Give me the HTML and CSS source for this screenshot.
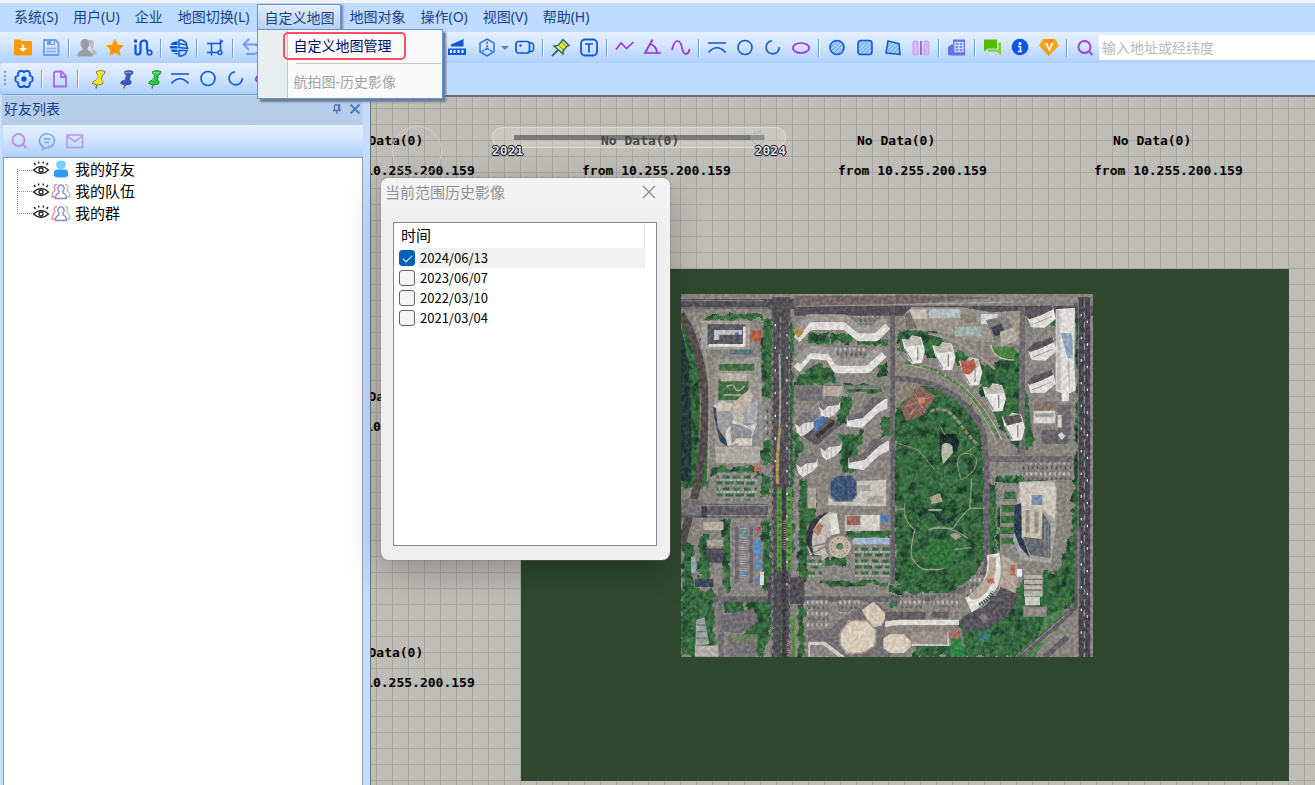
FILE: index.html
```html
<!DOCTYPE html>
<html lang="zh-CN">
<head>
    <meta charset="UTF-8">
    <meta name="viewport" content="width=device-width, initial-scale=1.0">
    <title>地图</title>
    <link rel="stylesheet" href="styles.css">
</head>
<body>
    <!-- shared icons -->
    <svg width="0" height="0" class="defs">
        <defs>
            <pattern id="hatch" width="3" height="3" patternUnits="userSpaceOnUse" patternTransform="rotate(45)">
                <rect width="3" height="3" fill="#a9d2f7"/><path d="M0 0v3" stroke="#3c86e0" stroke-width="1.2"/>
            </pattern>
            <symbol id="pushpin" viewBox="0 0 20 20">
                <path d="M11 15.500l-1 4" stroke="#777" stroke-width="1.500"/>
                <path d="M10.500 2.500 Q15 .3 19 2.500 L18.500 5 L16.500 6 L15.500 11 Q18.500 12.500 16.500 15 Q11 17.500 6.500 14.500 Q6.500 12 10.500 11 L12 6 L10.500 4.500Z" stroke="#555" stroke-width=".7"/>
                <path d="M12 5.500l-1.500 6M11 3.500q3 1 6 0" stroke="#fff" stroke-opacity=".55" fill="none"/>
            </symbol>
            <symbol id="arcline" viewBox="0 0 20 20"><path d="M1 5h18M1.500 14.500Q10 5 18.500 14.500" fill="none" stroke="#0a56e0" stroke-width="1.600"/></symbol>
            <symbol id="circle" viewBox="0 0 20 20"><circle cx="10" cy="9.500" r="7" fill="none" stroke="#0a56e0" stroke-width="1.600"/></symbol>
            <symbol id="arc" viewBox="0 0 20 20"><path d="M9 2.700A6.600 6.600 0 1 0 16.300 9" fill="none" stroke="#0a56e0" stroke-width="1.600"/></symbol>
            <symbol id="ellipse" viewBox="0 0 20 20"><ellipse cx="10" cy="10" rx="8.200" ry="5" fill="none" stroke="#9a2ed8" stroke-width="1.700"/></symbol>
            <symbol id="eye" viewBox="0 0 18 16"><path d="M1.500 9Q9 2 16.500 9Q9 16 1.500 9ZM3.500 4 2 2M7 2.500 6.500 .5M11 2.500l.5-2M14.500 4l1.500-2" fill="none" stroke="#222" stroke-width="1.300"/><circle cx="9" cy="9" r="2" fill="none" stroke="#222" stroke-width="1.300"/></symbol>
            <symbol id="group" viewBox="0 0 20 18">
                <g fill="none" stroke-width="1.300">
                    <path d="M6 2.500a2.600 2.600 0 0 0-2 4.500L3.500 9Q1 10.500 1 15h3" stroke="#ea8888"/>
                    <path d="M14 2.500a2.600 2.600 0 0 1 2 4.500l.5 2Q19 10.500 19 15h-3" stroke="#9bd6a0"/>
                    <path d="M8 9A3 3.500 0 1 1 12 9V11Q15.500 12 15.500 16.500h-11Q4.500 12 8 11Z" stroke="#8a80d8" fill="#fff"/>
                </g>
            </symbol>
            <symbol id="search" viewBox="0 0 20 20"><circle cx="9.500" cy="9" r="6" fill="none" stroke="currentColor" stroke-width="1.800"/><path d="M14 13.500l3.500 3.500" stroke="currentColor" stroke-width="1.800"/></symbol>
        </defs>
    </svg>

    <nav class="menubar">
        <ul>
            <li><button>系统(S)</button></li>
            <li><button>用户(U)</button></li>
            <li><button>企业</button></li>
            <li><button>地图切换(L)</button></li>
            <li class="open">
                <button>自定义地图</button>
                <div class="dropdown">
                    <button class="marked">自定义地图管理</button>
                    <hr>
                    <button disabled>航拍图-历史影像</button>
                </div>
            </li>
            <li><button>地图对象</button></li>
            <li><button>操作(O)</button></li>
            <li><button>视图(V)</button></li>
            <li><button>帮助(H)</button></li>
        </ul>
    </nav>

    <div class="toolbar main-tools">
        <button aria-label="打开"><svg viewBox="0 0 20 20"><path d="M1 3q0-1.500 1.500-1.500h5l1.500 1.500h8.500q1.500 0 1.500 1.500v11.500q0 1.500-1.500 1.500h-15q-1.500 0-1.500-1.500z" fill="#f90"/><path d="M8.800 6.500h2.400v3.500h2.800l-4 4-4-4h2.800z" fill="#fff"/></svg></button>
        <button aria-label="保存"><svg viewBox="0 0 20 20"><path d="M3 2h11.500l3 3V17H3Z" fill="none" stroke="#6c9df0" stroke-width="1.800"/><path d="M6 2h8v5H6z" fill="#6c9df0"/><path d="M10.500 3h2v3h-2z" fill="#fff"/><path d="M5.500 10.500h9.500M5.500 13.500h9.500" stroke="#8ab2f3" stroke-width="1.300"/></svg></button>
        <i class="sep"></i>
        <button aria-label="用户"><svg viewBox="0 0 20 20"><path d="M12 2q4-1 4.500 3t-1.500 6q4 1 5 5l-4 1z" fill="#b4b8bd"/><path d="M8 1q4.500 0 4.500 4.500 0 3-2 5v1.500q5 1.500 5.500 6.500H0q.5-5 5.500-6.500V10.500q-2-2-2-5Q3.500 1 8 1z" fill="#9c9c9c"/></svg></button>
        <button aria-label="收藏"><svg viewBox="0 0 20 20"><path d="M10 .5l2.800 5.900 6.200.8-4.500 4.500 1.100 6.400L10 15l-5.600 3.100 1.100-6.400L1 7.200l6.200-.8z" fill="#ff9800"/></svg></button>
        <button aria-label="路线"><svg viewBox="0 0 20 20"><path d="M2.500 6.500v8q0 2 2.300 2t2.700-2.500V5.500Q8 2.500 11 2.500t3 3v5.500q0 1 1.500 2" fill="none" stroke="#0a56e0" stroke-width="2.200"/><circle cx="16.500" cy="14.500" r="2.300" fill="none" stroke="#0a56e0" stroke-width="1.600"/><path d="M1 1.500h3v3H1z" fill="#0a56e0"/></svg></button>
        <i class="sep"></i>
        <button aria-label="地球"><svg viewBox="0 0 20 20"><path d="M8.500 3 3 4.500 1.500 7H8.500zM1 8h7.500v2.500H1zM2 11.500h6.500V14H3zM4 15h4.500v2z" fill="#0a56e0"/><path d="M10 2h3l4 2.500 1.500 6-8.500-1zM10 12.500h8l-2 4-3.500 1.500H10z" fill="none" stroke="#0a56e0" stroke-width="1.500"/><path d="M10 5.500l8 1.500" stroke="#0a56e0" stroke-width="1.300"/></svg></button>
        <i class="sep"></i>
        <button aria-label="裁剪"><svg viewBox="0 0 20 20"><path d="M2 5.500h13l3-3M6.500 5.500v12M2 14.500h11M15.500 1.500v10.500" fill="none" stroke="#0a56e0" stroke-width="1.500"/><circle cx="15" cy="14.500" r="2" fill="none" stroke="#0a56e0" stroke-width="1.300"/></svg></button>
        <i class="sep"></i>
        <button aria-label="撤销"><svg viewBox="0 0 20 20"><path d="M8 1 2.500 6.500 8 12M3 6.500h10q5 0 5 4.500t-5 5H5" fill="none" stroke="#6c9df0" stroke-width="1.800"/></svg></button>
        <i class="under-menu"></i>
        <button aria-label="测量"><svg viewBox="0 0 20 20"><path d="M4 6.500 16.500 1v7.500H4z" fill="#0a56e0"/><rect x="1" y="10.500" width="18" height="6.500" fill="#0a56e0"/><path d="M3 12h2v3H3zM6.500 12h2v3h-2zM10.500 12h2v3h-2zM14.500 12h2v3h-2z" fill="#fff"/></svg></button>
        <button aria-label="三维"><svg viewBox="0 0 20 20"><path d="M12 1 19 5.200v8.600l-7 4.200-7-4.200V5.200z" fill="none" stroke="#2a6fe6" stroke-width="1.500"/><path d="M12 3.500v7M12 10.500l-5 3M12 10.500l5 3" stroke="#0a56e0" stroke-width="1.300" stroke-dasharray="2.500 1"/></svg></button>
        <button class="arrow" aria-label="更多"><svg viewBox="0 0 12 20"><path d="M2 8h8l-4 4z" fill="#5a83c2"/></svg></button>
        <button aria-label="录像"><svg viewBox="0 0 20 20"><rect x="1" y="3.500" width="13.500" height="11.500" rx="2.500" fill="none" stroke="#0a56e0" stroke-width="1.700"/><path d="M15 5h2l1.500 1.500v5.500L17 13.500h-2" fill="none" stroke="#0a56e0" stroke-width="1.500"/><circle cx="5.500" cy="7.500" r="1.200" fill="#0a56e0"/></svg></button>
        <i class="sep"></i>
        <button aria-label="图钉"><svg viewBox="0 0 20 20"><path d="M1 18 7 12" stroke="#2a6f7a" stroke-width="1.800"/><path d="M12 1.500l6 6-1.800.6-4 4.400L12 16 3 8l4-.6L10.500 3.500z" fill="#f5f016" stroke="#1b66a0" stroke-width="1.500"/><path d="M8 7.500l5 5M11 4.500l4 4" stroke="#1b66a0" stroke-width=".8"/></svg></button>
        <button aria-label="文字"><svg viewBox="0 0 20 20"><rect x="2" y="1.500" width="16" height="16" rx="4" fill="none" stroke="#0a56e0" stroke-width="1.800"/><path d="M6 6h8M10 6V14.500" stroke="#0a56e0" stroke-width="1.700"/></svg></button>
        <i class="sep"></i>
        <button aria-label="折线"><svg viewBox="0 0 20 20"><path d="M1 11.500 6 5l5.500 5.500L18.500 4" fill="none" stroke="#9a2ed8" stroke-width="1.600"/></svg></button>
        <button aria-label="角度"><svg viewBox="0 0 20 20"><path d="M9.500 1.500 2 15h16M7.500 6q6 2 6.500 9" fill="none" stroke="#9a2ed8" stroke-width="1.700"/></svg></button>
        <button aria-label="曲线"><svg viewBox="0 0 20 20"><path d="M1 12Q3 3 6.500 3T11 10.500Q12.500 16 15 16t3.500-5" fill="none" stroke="#9a2ed8" stroke-width="1.700"/></svg></button>
        <i class="sep"></i>
        <button aria-label="弧线"><svg><use href="#arcline"/></svg></button>
        <button aria-label="圆"><svg><use href="#circle"/></svg></button>
        <button aria-label="圆弧"><svg><use href="#arc"/></svg></button>
        <button aria-label="椭圆"><svg><use href="#ellipse"/></svg></button>
        <i class="sep"></i>
        <button aria-label="圆形区域"><svg viewBox="0 0 20 20"><circle cx="10" cy="9.500" r="7" fill="url(#hatch)" stroke="#0a56e0" stroke-width="1.600"/></svg></button>
        <button aria-label="矩形区域"><svg viewBox="0 0 20 20"><rect x="3" y="2.500" width="14" height="14" rx="3" fill="url(#hatch)" stroke="#0a56e0" stroke-width="1.600"/></svg></button>
        <button aria-label="多边形区域"><svg viewBox="0 0 20 20"><path d="M5 3 16 5.500l1 11-14-1.500z" fill="url(#hatch)" stroke="#0a56e0" stroke-width="1.500"/></svg></button>
        <button aria-label="对称"><svg viewBox="0 0 20 20"><rect x="2" y="3" width="5" height="14" rx="1" fill="#dcb6f6" stroke="#b4a0d8" stroke-width=".8"/><rect x="13" y="3" width="5" height="14" rx="1" fill="#dcb6f6" stroke="#b4a0d8" stroke-width=".8"/><path d="M10 3v14" stroke="#9a2ed8" stroke-width="1.400"/></svg></button>
        <i class="sep"></i>
        <button aria-label="报表"><svg viewBox="0 0 20 20"><path d="M6 1.500h12v16H3q-2 0-2-2V9L4.500 6.500H6z" fill="#646fe8"/><path d="M8 4.500h8v9H8zM8 7.500h8M8 10.500h8M12 4.500v9" fill="none" stroke="#cfdcff" stroke-width="1.400"/></svg></button>
        <i class="sep"></i>
        <button aria-label="消息"><svg viewBox="0 0 20 20"><path d="M1 1.500h13v9H5l-4 3z" fill="#55bb00"/><path d="M15.500 4.500H18v13l-4-4H5v-2h10.500z" fill="#7bd11a"/></svg></button>
        <button aria-label="信息"><svg viewBox="0 0 20 20"><circle cx="9" cy="9" r="8.300" fill="#0a56e8"/><circle cx="9" cy="5.500" r="1.500" fill="#fff"/><path d="M7 8.500h2.500v5H11H7" fill="none" stroke="#fff" stroke-width="1.500"/></svg></button>
        <button aria-label="会员"><svg viewBox="0 0 20 20"><path d="M4 1h12L20 7.500 10 18 0 7.500z" fill="#ffa51c"/><path d="M4 1h12L10 6.500zM0 7.500l10 10.500V13.500z" fill="#f58b00" opacity=".6"/><path d="M6.500 6h2.500M11.500 6H14M7.500 6l2.800 6 2.700-6" fill="none" stroke="#fff" stroke-width="1.500"/></svg></button>
        <i class="sep"></i>
        <button class="purple" aria-label="搜索"><svg><use href="#search"/></svg></button>
        <input type="text" aria-label="地址" placeholder="输入地址或经纬度">
    </div>

    <div class="toolbar draw-tools">
        <i class="grip"></i>
        <button aria-label="设置"><svg viewBox="0 0 20 20"><path d="M5.500 2h3l1.500 1.200L11.500 2h3l1.500 2.500-.3 2 2.800 1.500v4l-2.800 1.500.3 2-1.500 2.500h-3L10 16.800 8.500 18h-3L4 15.500l.3-2L1.500 12V8l2.800-1.500-.3-2z" fill="none" stroke="#0a56e0" stroke-width="1.800" stroke-linejoin="round"/><circle cx="10" cy="10" r="2.700" fill="#0a56e0"/></svg></button>
        <i class="sep"></i>
        <button aria-label="新建"><svg viewBox="0 0 20 20"><path d="M5 2.500h6.500L16 7v10.500H4v-14zM11 3v5h5" fill="none" stroke="#a06af0" stroke-width="1.800"/></svg></button>
        <i class="sep"></i>
        <button aria-label="黄色图钉"><svg fill="#f2ea10"><use href="#pushpin"/></svg></button>
        <button aria-label="蓝色图钉"><svg fill="#2f58c8"><use href="#pushpin"/></svg></button>
        <button aria-label="绿色图钉"><svg fill="#12d436"><use href="#pushpin"/></svg></button>
        <button aria-label="弧线"><svg><use href="#arcline"/></svg></button>
        <button aria-label="圆"><svg><use href="#circle"/></svg></button>
        <button aria-label="圆弧"><svg><use href="#arc"/></svg></button>
        <button aria-label="椭圆"><svg><use href="#ellipse"/></svg></button>
    </div>

    <main>
        <aside>
            <header>
                <h2>好友列表</h2>
                <button aria-label="固定"><svg viewBox="0 0 12 12"><path d="M3.500 2h5v5M3.500 2v5M2 7.500h8M6 7.500V11M7.500 2v5" fill="none" stroke="#4a77b8" stroke-width="1.300"/></svg></button>
                <button aria-label="关闭"><svg viewBox="0 0 12 12"><path d="M1.500 1.500l9 9M10.500 1.500l-9 9" stroke="#4a77b8" stroke-width="1.800"/></svg></button>
            </header>
            <div class="toolbar friend-tools">
                <button class="lilac" aria-label="查找"><svg><use href="#search"/></svg></button>
                <button aria-label="聊天"><svg viewBox="0 0 20 20"><path d="M6 17.500V15.500A7.500 6.800 0 1 1 10 16.500Q8.500 16.500 6 18.500ZM6.500 8h7M7.500 11.500H12" fill="none" stroke="#6fa3f4" stroke-width="1.500"/></svg></button>
                <button aria-label="邮件"><svg viewBox="0 0 20 20"><path d="M2 4h15.500v12.500H2zM2 5l7.800 5.500L17.500 5" fill="none" stroke="#c092ec" stroke-width="1.500"/></svg></button>
            </div>
            <ul class="tree">
                <li><svg class="eye"><use href="#eye"/></svg><svg class="who" viewBox="0 0 20 18"><path d="M3 12q0-2 3-2.500h8q3 .5 3 2.500v3.500q0 2-7 2T3 15.500z" fill="#2c9df2"/><path d="M6 1.500q4-2 8 0 1.500 3 0 6Q12 9.500 10 9.500T6 7.500q-1.500-3 0-6z" fill="#79d0fb"/></svg>我的好友</li>
                <li><svg class="eye"><use href="#eye"/></svg><svg class="who"><use href="#group"/></svg>我的队伍</li>
                <li><svg class="eye"><use href="#eye"/></svg><svg class="who"><use href="#group"/></svg>我的群</li>
            </ul>
        </aside>

        <section class="map">
            <div class="tiles">
                <p>No Data(0)<br>from 10.255.200.159</p>
                <p>No Data(0)<br>from 10.255.200.159</p>
                <p>No Data(0)<br>from 10.255.200.159</p>
                <p>No Data(0)<br>from 10.255.200.159</p>
                <p class="first">No Data(0)<br>from 10.255.200.159</p>
                <p class="first">No Data(0)<br>from 10.255.200.159</p>
            </div>

            <div class="layer">
                <svg class="photo" viewBox="0 0 1236 1089" preserveAspectRatio="none">
                    <defs>
                        <filter id="foliage" x="-5%" y="-5%" width="110%" height="110%" color-interpolation-filters="sRGB">
                            <feTurbulence type="fractalNoise" baseFrequency=".035" numOctaves="4" seed="4" result="n"/>
                            <feDisplacementMap in="SourceGraphic" in2="n" scale="30" xChannelSelector="R" yChannelSelector="G" result="d"/>
                            <feColorMatrix in="n" values="0 0 0 0 .1  0 0 0 0 .24  0 0 0 0 .16  3 0 0 0 -1.3" result="s"/>
                            <feComposite in="s" in2="d" operator="in" result="shade"/>
                            <feMerge><feMergeNode in="d"/><feMergeNode in="shade"/></feMerge>
                        </filter>
                        <filter id="grain" x="0" y="0" width="100%" height="100%" color-interpolation-filters="sRGB">
                            <feTurbulence type="fractalNoise" baseFrequency=".09" numOctaves="3" seed="9"/>
                            <feColorMatrix values="3 0 0 0 -1.1  3 0 0 0 -1.1  3 0 0 0 -1.1  0 0 0 0 .1"/>
                        </filter>
                        <pattern id="cars" width="14" height="34" patternUnits="userSpaceOnUse">
                            <rect width="14" height="34" fill="#87837f"/><rect x="2" y="3" width="6" height="10" fill="#cac9c9"/><rect x="8" y="19" width="4" height="9" fill="#4c4a50"/>
                        </pattern>
                        <pattern id="lot" width="32" height="36" patternUnits="userSpaceOnUse">
                            <rect width="32" height="36" fill="#938e88"/><path d="M0 6h20M8 24h24" stroke="#2f6a40" stroke-width="9"/><path d="M2 15h28" stroke="#d5d2cf" stroke-width="4" stroke-dasharray="5 6"/>
                        </pattern>
                    </defs>
                    <rect width="1236" height="1089" fill="#8d8883"/>

                    <!-- planting -->
                    <g filter="url(#foliage)" fill="#37713f" stroke="none">
                        <path d="M0 60l40 50 40 170 0 300-80 0z"/>
                        <path d="M75 60h165v18H75zM245 70h27v240h-27zM315 80h22v700h-22zM58 130h25v28H58zM105 215h115v25H105zM110 260h85v60h-85zM90 520h150v30H90zM240 440h30v70h-30z"/>
                        <path d="M385 120h60v28h-60zM450 120h60v28h-60zM530 135h85v18h-85zM350 240l60-30 50 20 10 35-130 20zM490 270h115v26H490zM470 310h40v80h-40zM600 370h28v60h-28zM340 410l30 40-30 80zM465 425l90-15-30 60 20 50-60 20zM590 210h34v40h-34z"/>
                        <path d="M655 110h110l60 60 110 50 60-60 30 20v80l20 90 10 110-60-10-30-40-70-140-80-70-160-30zM1040 70h85v22h-85zM1187 30h38v520h-38zM980 330l50-10 30 120-50 50z"/>
                        <path d="M640 370q30-90 90-95 110 10 160 90 20 50 20 120v300q-10 70-100 95l-130 0q-38 0-38-50z"/>
                        <path d="M950 545h150v22H950zM915 570h30v280h-30zM950 640h55v130h-55zM1180 550h40l-20 370-90 50-120 60-80-60 20-60 60-10 50-60 90-10 40-100z"/>
                        <path d="M240 545h28v60h-28zM245 680h25v210h-25zM125 680h25v210h-25zM55 720h30v150H55zM5 750h35v150H5zM0 885h100v200H0zM130 920h60v40h-60zM200 915h70v90l-30 84-45-30z"/>
                        <path d="M355 560h25v300h-25zM350 930h20v159h-20zM280 960h20v129h-20zM380 600h25v90h-25zM500 710h130v22H500zM430 790h70v25h-70zM420 860h200v14H420zM625 870h200v30H625zM620 910h30v30h-30z"/>
                        <path d="M830 980l130-20 100 10 60-20-80 139H700v-35h150z"/>
                    </g>
                    <path d="M0 100q28 110 30 230t0 230H0z" fill="#203a38"/>
                    <path d="M35 100q30 120 22 300t-22 190" stroke="#7c8f4c" stroke-width="4" fill="none"/>
                    <path d="M1030 1060l30-20 30 5-30 44h-60zM1090 970l60-30-20 70-60 20z" fill="#4b8549"/>

                    <!-- streets -->
                    <g fill="none" stroke="#514e54">
                        <path d="M0 30h340M340 50h896" stroke-width="30"/>
                        <path d="M0 60C60 160 80 290 70 400S60 560 0 750" stroke-width="24" stroke="#554b4d"/>
                        <path d="M300 10v1079" stroke-width="56"/>
                        <path d="M0 650h260" stroke-width="42" stroke="#605d62"/>
                        <path d="M635 60v810" stroke-width="14" stroke="#66636a"/>
                        <path d="M638 255q40-5 90 10 120 30 175 140 15 60 14 160v250q-10 60-120 90l-70 10H100" stroke-width="17" stroke="#68646a"/>
                        <path d="M1023 40v450M915 495h260" stroke-width="18" stroke="#706c70"/>
                        <path d="M1210 10v1079" stroke-width="38" stroke="#45434b"/>
                        <path d="M1015 1089 1150 970 1190 930V700M1090 1089l70-60" stroke-width="17" stroke="#625f66"/>
                        <path d="M340 280h290" stroke-width="12" stroke="#817c7c"/>
                        <path d="M120 880v209" stroke-width="18" stroke="#777277"/>
                    </g>
                    <path d="M260 850h110v80H260z" fill="#4e4b52"/>
                    <path d="M340 4h300l300 6-300 24H340z" fill="#75696a"/>
                    <path d="M345 13h300M345 27h290" stroke="#966960" stroke-width="4" stroke-dasharray="3 6"/>
                    <g fill="none" stroke="#d8d5d6" stroke-width="2">
                        <path d="M345 3h300M340 38 1000 24M0 20h250M0 42h260" opacity=".7"/>
                        <path d="M298 70v320M275 80v1000M325 80v1000" stroke-dasharray="14 10" opacity=".7"/>
                        <path d="M1210 20v1069" stroke-dasharray="20 12"/>
                        <path d="M1192 20v1069M1229 20v1069" opacity=".5"/>
                        <path d="M1020 1080 1150 966M70 635h190M70 665h190" opacity=".7"/>
                    </g>
                    <path d="M287 580h18v250h-18zM315 580h18v250h-18zM301 960h10v129h-10zM331 960h10v129h-10z" fill="#56933f"/>
                    <path d="M296 600v230M324 600v230" stroke="#346b36" stroke-width="8" stroke-dasharray="6 14"/>
                    <path d="M295 180q6 120 0 220" stroke="#b0aaa6" stroke-width="5" fill="none"/>
                    <path d="M297 400q-10 80-8 170" stroke="#b89b55" stroke-width="9" fill="none"/>
                    <path d="M309 570v519" stroke="#3c3b44" stroke-width="13"/>
                    <path d="M311 680v90M322 1040v49" stroke="#b57f77" stroke-width="8" stroke-dasharray="3 4"/>
                    <path d="M283 90v470M318 120v800M1201 60v980M1219 80v950" stroke="#eee" stroke-width="4" stroke-dasharray="7 61"/>
                    <path d="M40 66C90 190 90 280 80 560" stroke="#a59e96" stroke-width="5" fill="none"/>

                    <!-- north-west block -->
                    <g transform="translate(-3 -12)">
                        <path d="M62 92h148v86H62z" fill="#aaa49c"/>
                        <path d="M83 103h113v62H83z" fill="#575861"/><path d="M102 120h84v14h-68v16h-16z" fill="#c6c7c8"/><path d="M86 162h110v8H86zM189 110h8v55h-8z" fill="#ecebea"/><path d="M165 127h12v8h-12z" fill="#3e73bd"/>
                        <path d="M212 121h31v33h-31z" fill="#bd583f"/><path d="M150 179h70v14h-70z" fill="#4f7780"/>
                        <path d="M102 210l140-10 8 280-145 30z" fill="#9e9b96"/>
                        <path d="M118 222h105v20H118zM115 268h90v62h-90z" fill="#3f6d43"/><path d="M122 250h80v24h-80z" fill="#c3b7a8"/>
                        <path d="M140 290q20-12 25 5t30-8M130 315h60" stroke="#b9b49d" stroke-width="4" fill="none"/>
                        <path d="M100 345l25-15 35 10 10 50-20 30-30 0-12-50z" fill="#a2a3a3"/><path d="M100 345l25-12 35 8-10 20-40 5z" fill="#d3cdc2"/>
                        <path d="M158 340l50-42 12 20-32 85-30-15z" fill="#c9bcac"/><path d="M188 403l50-80v145h-60z" fill="#8b8d93"/><path d="M187 400l5-50 43-20-5 70z" fill="#afb1b5"/>
                        <path d="M136 425l25-35 40 18 32-10-20 50-70 20z" fill="#d7d6d3"/><path d="M150 400l30 5 35 15 0 30-45-5-15 20z" fill="#96979c"/><path d="M176 445h40v22h-40z" fill="#ddd4c6"/><path d="M98 350l10 5 5 60 25 35 5 20-22-15-14-50z" fill="#34445a"/>
                        <path d="M108 470h132v50H108z" fill="#b3b0ab"/><path d="M140 545h70v14h-70z" fill="#4fa6a7"/><path d="M222 530h22v14h-22z" fill="#c76a4b"/>
                        <path d="M250 360h18v90h-18z" fill="url(#cars)"/>
                        <path d="M510 78h90v50h-90zM440 165h120v35H440z" fill="url(#cars)"/>
                        <g fill="none" stroke-linejoin="bevel">
                            <path d="M350 148l38-40h108l42 34h50l34-34" stroke="#e9e7e4" stroke-width="24"/>
                            <path d="M352 128l34-44h109l42 34h44l34-32" stroke="#a19d9b" stroke-width="22"/>
                            <path d="M350 238l38-44 60 6 22 38h92l50-46" stroke="#ebe9e6" stroke-width="24"/>
                            <path d="M352 216l36-38 64 4 22 34h82l46-42" stroke="#a29e9c" stroke-width="22"/>
                        </g>
                        <path d="M340 125l18-15 14 16-18 18z" fill="#b98e42"/>
                        <path d="M348 292h78v40h-78z" fill="#747174"/><path d="M430 288h60v30h-60z" fill="#b9ada1"/>
                        <g id="tower">
                            <path d="M415 345l20-22 36-4 10 14v22l-18 20-28 14-12-12z" fill="#e9e7e5"/><path d="M414 348l20-28 34-3 14 14-6 14-32 4-14 12z" fill="#7d7a7b"/><path d="M436 356v24M450 350v30M464 346v26" stroke="#a8a5a5" stroke-width="2"/>
                        </g>
                        <use href="#tower" x="-72" y="50"/><use href="#tower" x="4" y="122"/><use href="#tower" x="-68" y="172"/>
                        <path d="M370 440l70-60 45 20-75 68z" fill="#63585a"/><path d="M400 395l30-18 10 10-36 45z" fill="#4d78b8"/><path d="M410 440l52-45" stroke="#37343a" stroke-width="12"/>
                        <g id="slab"><path d="M500 378l46-6 44-42 32-4v30l-28 12-48 46-46-5z" fill="#e9e7e5"/><path d="M500 376l42-8 34-48 44 4-30 20-42 40-44 8z" fill="#6e6a6d"/></g>
                        <use href="#slab" x="5" y="126"/>
                    </g>

                    <!-- north-east block -->
                    <g transform="translate(612 -12)">
                        <path d="M55 120l5-50 20-18h150l90 15 85-5-2 100-150-10-100-30z" fill="#a0998f"/><path d="M132 57h95v28h-95z" fill="#bac5c5"/><path d="M75 58h50v28H75z" fill="#d0c8bd"/><path d="M210 110h78v28h-78z" fill="#a4b7b0"/><path d="M60 75l15-10 20 50-30 5z" fill="#77716e"/><path d="M225 75l40-10 10 30-45 6z" fill="#8d837c"/>
                        <path d="M288 72h50v30h-50z" fill="#d8dfe0"/><path d="M302 90l62-12 30 50-15 40-48-10z" fill="#83827f"/><path d="M318 112l30-12 12 30-32 10z" fill="#3f434b"/><path d="M345 125l45-15 8 40-50 20z" fill="#b9b2a8"/>
                        <path d="M322 170l68 2v34l-58-5z" fill="#478442"/><path d="M318 165q5 45 70 45" stroke="#cfc1a8" stroke-width="5" fill="none"/>
                        <path d="M130 130q110 20 200 108" stroke="#a29c91" stroke-width="8" fill="none"/>
                        <g fill="none" stroke="#c3c2a4" stroke-width="3"><path d="M45 198q15 25 60 35 140 15 230 225M62 204q10 10 60 30 150 40 228 215"/><path d="M60 218q180 20 280 225" stroke="#528645" stroke-width="8" stroke-dasharray="22 4"/></g>
                        <g id="block"><path d="M50 146l20 4 10-14 28 5 12 40-10 38-30 2-22-45z" fill="#f0efec"/><path d="M52 146l18 4 10-12 26 5 6 22-48 4z" fill="#c6c0b8"/><path d="M60 178l22 38M98 172v38" stroke="#8e8f94" stroke-width="4"/></g>
                        <use href="#block" x="92" y="20"/><use href="#block" x="172" y="66"/><path d="M225 210l28 2 14-6 8 26-22 22-20-4z" fill="#b9604f"/>
                        <use href="#block" x="243" y="144"/><use href="#block" x="300" y="232"/><path d="M352 378l24 0 28-5 8 22-46 12z" fill="#5b5555"/>
                        <path d="M512 58l58-5-2 160 4 90-30 10-30-10z" fill="#eae8e3"/><path d="M528 130h30l5 20v55h-15z" fill="#91abc7"/><path d="M515 60h12v240h-12zM545 215h10v90" fill="#c9c7c5"/>
                        <g id="wedge"><path d="M428 86l40-30 35-10 10 40-35 28-40-2z" fill="#eae8e5"/><path d="M426 80l20-20 20-4 35-12 4 14-37 18-35 12z" fill="#56535a"/><path d="M440 104l60-24" stroke="#a9a6a8" stroke-width="3"/></g>
                        <use href="#wedge" x="2" y="98"/><use href="#wedge" y="196"/>
                        <path d="M530 298h22v36h-22z" fill="#edeceb"/><path d="M446 335h66v40h-66z" fill="#86766d"/><path d="M446 362h65v38h-65z" fill="#e1dedb"/><path d="M450 370h56v12h-56z" fill="#a8a29d"/>
                        <path d="M518 345h40v90h-40z" fill="#706d72"/><path d="M470 420h80v42h-80z" fill="#69646a"/><path d="M518 435l12-10 12 12-12 14z" fill="#cbd9ea"/><path d="M518 375h12v38h-12z" fill="#ddd5ca"/>
                        <path d="M412 520h150v50H412z" fill="url(#cars)"/>
                        <path d="M350 560q30-25 55-5" stroke="#87969b" stroke-width="12" fill="none"/>
                        <!-- park -->
                        <path d="M30 285l50-5 10 30-48 35z" fill="#8d8577"/><path d="M48 350l55-62 50 30-40 56-50 20z" fill="#8a6258"/><path d="M60 350l80-30M90 310l30 60M75 375l50-60" stroke="#b5968a" stroke-width="3"/><path d="M100 325l14-5 8 15-14 8z" fill="#d8834e"/>
                        <path d="M135 365q45-25 85 30t60 70" stroke="#958b75" stroke-width="9" stroke-dasharray="14 5" fill="none"/>
                        <path d="M162 432l50 0 12 25-10 30-45-10z" fill="#152826"/><path d="M170 466q15-16 32 2l2 20-30 35-5-30z" fill="#c5beb0"/>
                        <path d="M218 530q-5-45 30-40t25 35-45 45zM160 400l20 35M40 460l60 20 50 60M270 470l-30 20" stroke="#98987c" stroke-width="3" fill="none"/>
                    </g>

                    <!-- south-west block -->
                    <g transform="translate(-3 543)">
                        <path d="M530 18l88-4v80l-175-3 2-28 20 18h52l15-20z" fill="#cfcbc6"/><path d="M533 30h40v18h-40zM560 62h50v24h-50z" fill="#aeaaa5"/><path d="M382 40h26v60h-26z" fill="#b1a8a0"/>
                        <path d="M452 20l20-18h45l12 20v38l-16 17h-46l-15-18z" fill="#3b5277"/><path d="M490 38L457 8M490 38l38-30M490 38l-33 34M490 38l38 34" stroke="#536f96" stroke-width="2"/>
                        <path d="M110-10h120v86H110z" fill="url(#lot)"/>
                        <path d="M380 200q0-75 70-90l25 5-10 20 12 40q-50 5-40 50l8 18-32 25q-30-25-33-68z" fill="#c6c1ba"/><path d="M378 205q-5-75 70-96l-30 25q-30 40-20 90l8 30z" fill="#33343c"/><path d="M445 120l25-5 10 60-24 5z" fill="#ebe8e3"/><path d="M397 165l20-22 14 10-18 30z" fill="#b37a6a"/><path d="M393 215l45-10M397 235l40-20" stroke="#837d7a" stroke-width="4"/>
                        <circle cx="479" cy="216" r="33" fill="#c8bda9"/><circle cx="479" cy="216" r="25" fill="none" stroke="#8a8070" stroke-width="4" stroke-dasharray="4 6"/><circle cx="479" cy="214" r="10" fill="#4c8050"/>
                        <path d="M495 120h105v48H495z" fill="#c9c1b8"/><path d="M500 122h40v28h-40z" fill="#9d6860"/><path d="M543 120h54v45h-54z" fill="#dedad4"/><path d="M602 122h26v18h-26z" fill="#4a7cc4"/>
                        <path d="M520 188h108v20H520z" fill="#a7bedb"/><path d="M525 215h105v90H525zM385 240h40v65h-40z" fill="url(#lot)"/>
                        <path d="M150 145h74v190h-74z" fill="#8b8588"/><path d="M165 155h10v170h-10zM208 155h10v170h-10z" fill="#6d696d"/><path d="M191 160v160" stroke="#b5b1b0" stroke-width="20" stroke-dasharray="2 5"/><path d="M191 165v24" stroke="#43a38d" stroke-width="22" stroke-dasharray="4 4"/>
                        <path d="M222 195h22v50h-22zM225 260h20v24h-20zM228 305h18v20h-18zM183 292h18v8h-18z" fill="#568cc5"/><path d="M240 290h12v40h-12z" fill="#e7e3dc"/><path d="M228 155h15v13h-15z" fill="#b54e4c"/>
                        <path d="M82 220h48v43H82z" fill="#4c4b55"/><path d="M80 195h50v18H80z" fill="#aea69c"/><path d="M45 312h55v24H45z" fill="#39465b"/><path d="M33 245h14v50H33z" fill="#8fb3b7"/><path d="M70 140h60v25H70z" fill="#bcb5a9"/>
                        <path d="M5 72h70v48H5z" fill="#797579"/><path d="M65 95h15v32H65z" fill="#39394a"/>
                        <path d="M130 420l90-20 15 40-50 35-55-5z" fill="#726e73"/><path d="M145 480h85v65h-85z" fill="#797477"/><path d="M150 478h80v25h-80z" fill="#718065"/>
                        <path d="M48 435l25-8 15 80-42 5z" fill="#a3a9a6"/><path d="M52 450h25M52 470h28M50 490h30" stroke="#6d7779" stroke-width="5"/><path d="M45 512h70v33H45z" fill="#bbb6b0"/>
                        <path d="M380 375h65v80h-65zM475 375h70v40h-70z" fill="url(#cars)"/>
                        <path d="M383 465l70-5 20-20 100-68 60 40v133H390z" fill="#777176"/>
                        <path d="M385 500h50l60 45H385z" fill="#dcd8d2"/><path d="M390 510h40l45 35h-85z" fill="#8f898a"/>
                        <path d="M545 405l35-25 40 38-15 34-30 6z" fill="#ddcfbc"/>
                        <path d="M480 475l28-38h55l25 32-4 45-38 20-45 2-20-25z" fill="#e5d6c3"/><path d="M480 475l28-38h55l25 32-4 45-38 20-45 2-20-25z" fill="none" stroke="#a79d93" stroke-width="5"/>
                    </g>

                    <!-- south-east block -->
                    <g transform="translate(612 543)">
                        <path d="M60 85q-10 50 30 80-15 50-10 80 20 45 60 38 55 10 70-60l50-5M260 10l-5 90q-25 20-50 60l-70 0M255 100h45M30 105l30-5M130 165q30-15 60-5t60 30" stroke="#939c7e" stroke-width="4" fill="none"/>
                        <path d="M122 225q5-30 48-30t40 45-45 38-43-53z" fill="#2d7437"/><path d="M100 120q40-30 60 5t55-10" stroke="#1a3830" stroke-width="13" fill="none"/><path d="M135 65l30-10 8 25-35 8zM195 180q20-15 35 5l-20 10z" fill="#a9a18d"/><path d="M130 105h40" stroke="#bdb8a4" stroke-width="5"/>
                        <path d="M345 25h50v220h-50z" fill="#8f8c86"/><path d="M350 90h38v22h-38zM348 122h42v22h-42zM345 155h50v22h-50zM350 188h42v20h-42zM358 50h34v22h-34z" fill="#396f3d"/>
                        <path d="M402 20l110-4 4 130-18 118-90-8-24-60z" fill="#aba8a5"/><path d="M405 22h100l10 20-5 90-40-30-65-10z" fill="#d7cfc3"/><path d="M440 60h32v30h-32z" fill="#7c93b0"/><path d="M388 90l20-5 5 100 22 65-30-35-18-45z" fill="#283950"/>
                        <path d="M410 95h62v95h-62z" fill="#cfc5b6"/><path d="M422 105h12v70h-12zM448 110h12v65h-12z" fill="#9b9389"/><path d="M472 110l24 40v100l-60-10-22-55 56 8z" fill="#656b72"/><path d="M480 130v110M490 150v95" stroke="#868b8f" stroke-width="3"/>
                        <path d="M350 240l48 25v60l-10 40-50 15z" fill="#b9aa9b"/><path d="M377 270h14v32h-14z" fill="#bc6754"/><path d="M396 282h15v23h-15z" fill="#fff"/>
                        <path d="M262 410q65-20 85-75l55 25q-25 70-95 100l-75 10 0-45z" fill="#58515a"/><path d="M280 425l18-12 15 18-15 12z" fill="#787b8a"/>
                        <path d="M305 240l38-6q15 80-18 120-25 35-65 58l-20-44q80-45 65-128z" fill="#eeebe5"/><path d="M312 245l20 0q6 60-20 96t-53 34l-10-14q70-40 63-116z" fill="#bcae9e"/><path d="M308 310h20v15h-20z" fill="#c66b57"/><path d="M282 388q26-10 42-38" stroke="#45454e" stroke-width="10" stroke-dasharray="5 3" fill="none"/>
                        <path d="M417 293h56v72h-56z" fill="#bdb9b2"/><path d="M417 297h55M417 313h55M417 329h55M417 345h55" stroke="#77716f" stroke-width="4"/><path d="M420 366h45v25h-45z" fill="#d4cfc8"/><path d="M415 395h70v30h-70z" fill="#958c86"/><path d="M475 285h15v80h-15z" fill="#2f6a40"/>
                        <path d="M245 320l45-35 8 30-55 55zM45 360h75v40H45zM145 355h75v40h-75z" fill="url(#cars)"/>
                        <path d="M0 408h220v60h8v45H75L0 520z" fill="#8e8780"/><path d="M0 410h122v25H0zM140 410h50v20h-50z" fill="#655e62"/><path d="M0 440l40-6h182v16H40l-40 6z" fill="#e9e6e1"/><path d="M80 470h105v38H80z" fill="#9e968b"/><path d="M80 510h110v-40" stroke="#e9e6e1" stroke-width="5" fill="none"/><path d="M190 470h35v18h-35z" fill="#a9645d"/>
                        <path d="M-5 490l20-12h42l20 20v18l-20 18H15l-20-15z" fill="#e3d6c5"/>
                        <path d="M200 490h28l15 55h-50z" fill="#2f8543"/><path d="M280 470l35-5v34l-35 3z" fill="#35796c"/>
                    </g>
                    <rect width="1236" height="1089" filter="url(#grain)"/>
                </svg>
            </div>

            <div class="compass"></div>
            <div class="timeline">
                <input type="range" min="2021" max="2024" value="2024" aria-label="年份">
                <div class="years"><span>2021</span><span>2024</span></div>
            </div>
        </section>
    </main>

    <div class="dialog" role="dialog" aria-labelledby="dialog-title">
        <header>
            <h2 id="dialog-title">当前范围历史影像</h2>
            <button aria-label="关闭"><svg viewBox="0 0 14 14"><path d="M1 1l12 12M13 1L1 13" stroke="#888" stroke-width="1.300"/></svg></button>
        </header>
        <div class="list">
            <table>
                <thead><tr><th colspan="2">时间</th></tr></thead>
                <tbody>
                    <tr class="selected"><td><input type="checkbox" id="d1" checked></td><td><label for="d1">2024/06/13</label></td></tr>
                    <tr><td><input type="checkbox" id="d2"></td><td><label for="d2">2023/06/07</label></td></tr>
                    <tr><td><input type="checkbox" id="d3"></td><td><label for="d3">2022/03/10</label></td></tr>
                    <tr><td><input type="checkbox" id="d4"></td><td><label for="d4">2021/03/04</label></td></tr>
                </tbody>
            </table>
        </div>
    </div>
</body>
</html>
```
FILE: styles.css
```css
* {
    margin: 0;
    padding: 0;
    box-sizing: border-box;
}

body {
    display: flex;
    flex-direction: column;
    height: 100vh;
    overflow: hidden;
    border-top: 3px solid #f0f2f8;
    background: #bfdbff;
    font: 14px/20px "Noto Sans", "Noto Sans CJK SC", sans-serif;
}

button {
    border: 0;
    background: none;
    font: inherit;
    color: inherit;
}

svg {
    display: block;
}

.defs {
    position: absolute;
}

/* menu */
.menubar ul {
    display: flex;
    gap: 1px;
    height: 29px;
    padding: 1px 7px 0;
    list-style: none;
    color: #15428b;
}
.menubar li {
    position: relative;
}
.menubar li > button {
    height: 26px;
    padding: 0 7px;
    white-space: nowrap;
}
.menubar .open > button {
    padding: 0 6px;
    border: 1px solid #6593cf;
    border-bottom: 0;
    background: linear-gradient(#e6effb, #b4cef2);
    box-shadow: 2px 1px 2px #6e86a8;
}
.dropdown {
    position: absolute;
    z-index: 20;
    top: 25px;
    left: 0;
    display: flex;
    flex-direction: column;
    align-items: flex-start;
    width: 186px;
    height: 70px;
    padding: 2px 1px 2px 25px;
    border: 1px solid #6593cf;
    background: linear-gradient(90deg, #e9eeee 29px, #c5c5c5 29px, #c5c5c5 30px, #fafafa 30px);
    box-shadow: 3px 3px 2px #6e7c90;
    color: #000a6b;
}
.dropdown button {
    padding: 0 10px;
    line-height: 32px;
    white-space: nowrap;
}
.dropdown .marked {
    padding: 0 13px 0 8px;
    border: 2px solid #ff4f62;
    border-radius: 5px;
    line-height: 24px;
}
.dropdown hr {
    align-self: stretch;
    margin: 3px 0 2px 13px;
    border: 0;
    border-top: 1px solid #c5c5c5;
}
.dropdown button:disabled {
    color: #a3a3a3;
}

/* toolbars */
.toolbar {
    display: flex;
    align-items: center;
    flex-shrink: 0;
    height: 31px;
    padding-left: 9px;
    background: linear-gradient(#e5f0ff, #d5e6ff 40%, #aed0ff);
}
.toolbar button {
    display: flex;
    justify-content: center;
    flex: 0 0 28px;
}
.toolbar svg {
    width: 20px;
    height: 20px;
}
.toolbar .arrow {
    flex-basis: 12px;
}
.toolbar .arrow svg {
    width: 12px;
}
.sep {
    flex: 0 0 8px;
    height: 18px;
    background: linear-gradient(90deg, transparent 3px, #6f9dd9 3px, #6f9dd9 4px, #fff 4px, #fff 5px, transparent 5px);
}
.under-menu {
    flex: 0 0 178px;
}
.purple {
    color: #9a3fdc;
}
.toolbar input {
    flex: 1;
    min-width: 0;
    height: 25px;
    padding: 0 3px;
    border: 0;
    font: inherit;
}
.toolbar input::placeholder {
    color: #b9b9b9;
}
.draw-tools {
    width: 430px;
    height: 32px;
    padding-left: 4px;
    border-bottom: 1px solid #6f9dd9;
    border-radius: 4px;
}
.grip {
    flex: 0 0 6px;
    height: 16px;
    background: repeating-linear-gradient(#6f9dd9 0 2px, transparent 2px 4px) no-repeat 0 0 / 2px 100%;
}

main {
    display: flex;
    flex: 1;
    min-height: 0;
}

/* friends panel */
aside {
    display: flex;
    flex-direction: column;
    flex: 0 0 370px;
    padding: 1px 7px 0 1px;
    border-left: 1px solid #cfe1f8;
    background: #c4ddfd;
}
aside header {
    display: flex;
    align-items: center;
    gap: 6px;
    height: 29px;
    padding: 0 2px 3px;
    background: #b7cde9;
    color: #15428b;
}
h2 {
    flex: 1;
    font-size: 14px;
    font-weight: normal;
}
aside header svg {
    width: 12px;
    height: 12px;
}
.friend-tools {
    height: 32px;
    margin-left: 1px;
    padding-left: 2px;
}
.lilac {
    color: #ba8cee;
}
.tree {
    flex: 1;
    margin-left: 1px;
    padding: 0 0 0 13px;
    border: 1px solid #8e9cae;
    border-bottom: 0;
    background: #fff;
    font-size: 15px;
    list-style: none;
}
.tree li {
    display: flex;
    align-items: center;
    height: 22px;
    color: #000;
}
.tree li::before {
    content: "";
    align-self: flex-start;
    width: 14px;
    height: 22px;
    margin-top: -11px;
    border-left: 1px dotted #888;
    border-bottom: 1px dotted #888;
}
.tree li:first-child::before {
    height: 1px;
    margin-top: 11px;
    border-left-color: transparent;
}
.eye {
    width: 18px;
    height: 16px;
}
.who {
    width: 20px;
    height: 18px;
    margin: 0 4px 0 1px;
}

/* map */
.map {
    position: relative;
    flex: 1;
    min-width: 0;
    overflow: hidden;
    border: solid #6e6e70;
    border-width: 2px 0 0 1px;
    background-color: #bfbdb8;
    background-image: linear-gradient(#a9a8a4 1px, transparent 1px), linear-gradient(90deg, #a9a8a4 1px, transparent 1px);
    background-size: 16px 16px;
    background-position: 5px 11px;
}
.tiles {
    display: grid;
    grid-template-columns: repeat(4, 256px);
    grid-auto-rows: 256px;
    margin-left: -114px;
}
.tiles p {
    padding: 29px 0 0 69px;
    text-indent: 19px;
    font: bold 13px/30px "DejaVu Sans Mono", monospace;
}
.tiles .first {
    grid-column: 1;
}
.layer {
    position: absolute;
    top: 172px;
    left: 150px;
    width: 768px;
    height: 512px;
    padding: 25px 160px;
    background: #2f482f;
}
.photo {
    width: 412px;
    height: 363px;
}
.compass {
    position: absolute;
    top: 29px;
    left: 21px;
    width: 50px;
    height: 50px;
    border: 1px solid #d0cfcb;
    border-radius: 50%;
}
.timeline {
    position: absolute;
    top: 30px;
    left: 121px;
    width: 294px;
}
.timeline input {
    display: block;
    appearance: none;
    width: 100%;
    height: 21px;
    padding: 0 20px;
    border: 1px solid rgba(230, 230, 225, .6);
    border-radius: 10px;
    background: linear-gradient(rgba(70, 70, 70, .6), rgba(70, 70, 70, .6)) no-repeat center / 250px 5px, rgba(225, 225, 220, .3);
}
.timeline input::-webkit-slider-thumb {
    appearance: none;
    width: 14px;
    height: 14px;
    border: 1px dashed #a9a9a6;
    border-radius: 50%;
    background: rgba(190, 190, 185, .3);
}
.years {
    display: flex;
    justify-content: space-between;
    margin-top: -6px;
    font: bold 13px/18px "DejaVu Sans Mono", monospace;
    color: #e6e2f6;
    text-shadow: 1px 0 #000, -1px 0 #000, 0 1px #000, 0 -1px #000;
}

/* history window */
.dialog {
    position: absolute;
    z-index: 10;
    top: 178px;
    left: 381px;
    width: 289px;
    height: 382px;
    display: flex;
    flex-direction: column;
    border-radius: 8px;
    background: #efefef;
    box-shadow: 0 0 2px #777, 0 12px 36px rgba(0, 0, 0, .25);
}
.dialog header {
    display: flex;
    align-items: center;
    height: 30px;
    padding: 0 14px 2px 4px;
    border-radius: 8px 8px 0 0;
    background: #f3f3f3;
    color: #909090;
}
.dialog h2 {
    font-size: 15px;
}
.dialog header svg {
    width: 14px;
    height: 14px;
}
.list {
    flex: 1;
    margin: 14px 13px 14px 12px;
    padding-right: 11px;
    border: 1px solid #828790;
    background: #fff;
}
table {
    width: 100%;
    border-collapse: collapse;
}
th {
    height: 25px;
    padding: 0 0 2px 7px;
    border-right: 1px solid #e5e5e5;
    text-align: left;
    font-size: 15px;
    font-weight: normal;
}
td {
    height: 20px;
    padding-left: 2px;
    font: 13px/20px "Noto Sans CJK SC", sans-serif;
}
td:first-child {
    width: 24px;
    padding-left: 5px;
}
.selected td:last-child {
    background: #f0f0f0;
}
td input {
    display: grid;
    place-items: center;
    appearance: none;
    width: 16px;
    height: 16px;
    border: 1px solid #666;
    border-radius: 3px;
    background: #f5f5f5;
}
td input:checked {
    border-color: #005fb8;
    background: #005fb8;
}
td input:checked::after {
    content: "";
    width: 8px;
    height: 4px;
    margin-bottom: 2px;
    border: solid #fff;
    border-width: 0 0 1px 1px;
    transform: rotate(-45deg);
}
```
